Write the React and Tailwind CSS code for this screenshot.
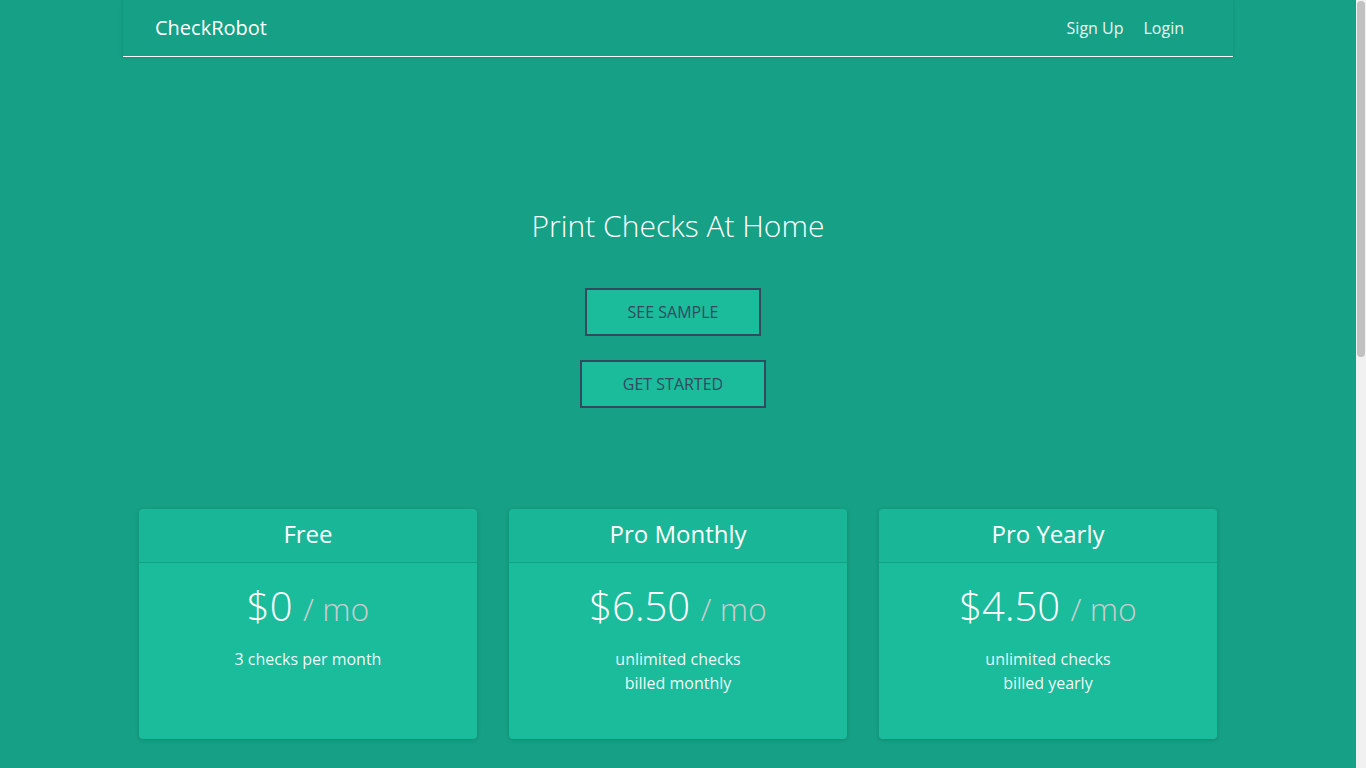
import React from 'react';

const plans = [
  { name: 'Free', price: '$0', lines: ['3 checks per month'] },
  { name: 'Pro Monthly', price: '$6.50', lines: ['unlimited checks', 'billed monthly'] },
  { name: 'Pro Yearly', price: '$4.50', lines: ['unlimited checks', 'billed yearly'] },
];

const App = () => {
  return (
    <div className="min-h-[1640px] bg-[#16a085] pr-[10px] font-['Open_Sans',sans-serif] text-white">
      {/* fake scrollbar */}
      <div className="fixed top-0 right-0 h-screen w-[10px] bg-[#f1f1f1] p-[1px]">
        <div className="h-[356px] rounded-full bg-[#c1c1c1]"></div>
      </div>

      <div className="mx-auto w-[1110px]">
        {/* Navbar */}
        <nav className="flex h-[57px] items-center justify-between border-b border-white pl-8 pr-[49px] shadow-[0_0_4px_rgba(0,0,0,0.12)]">
          <a className="text-[20px] leading-[30px] text-white">CheckRobot</a>
          <div className="flex gap-5 text-[16px] leading-6 text-white/90">
            <a>Sign Up</a>
            <a>Login</a>
          </div>
        </nav>

        {/* Hero */}
        <section className="flex flex-col items-center pt-[149px]">
          <h1 className="text-[30px] font-light leading-[40px]">Print Checks At Home</h1>
          <div className="mt-[42px] flex flex-col items-center gap-[24px] pr-[10px]">
            <button className="border-2 border-[#34495e] bg-[#1abc9c] px-[41px] py-[10px] text-[16px] leading-6 text-[#34495e]">
              SEE SAMPLE
            </button>
            <button className="border-2 border-[#34495e] bg-[#1abc9c] px-[41px] py-[10px] text-[16px] leading-6 text-[#34495e]">
              GET STARTED
            </button>
          </div>
        </section>

        {/* Pricing */}
        <section className="mt-[101px] grid grid-cols-3 gap-8 px-4">
          {plans.map((p) => (
            <div key={p.name} className="flex flex-col overflow-hidden rounded bg-[#1abc9c] shadow-[0_1px_4px_rgba(0,0,0,0.15)]">
              <div className="border-b border-[#14a285] bg-black/[0.03] px-5 pt-[11px] pb-[14px] text-center">
                <h4 className="text-[24px] leading-[28px]">{p.name}</h4>
              </div>
              <div className="px-5 pt-5 pb-5 text-center">
                <h2 className="text-[40px] font-light leading-[46px]">
                  {p.price} <span className="text-[32px] text-[#cccccc]">/ mo</span>
                </h2>
                <ul className="mt-[15px] mb-6 text-[16px] leading-6 text-white/95">
                  {p.lines.map((l) => (
                    <li key={l}>{l}</li>
                  ))}
                </ul>
              </div>
            </div>
          ))}
        </section>
      </div>
    </div>
  );
};

export default App;
